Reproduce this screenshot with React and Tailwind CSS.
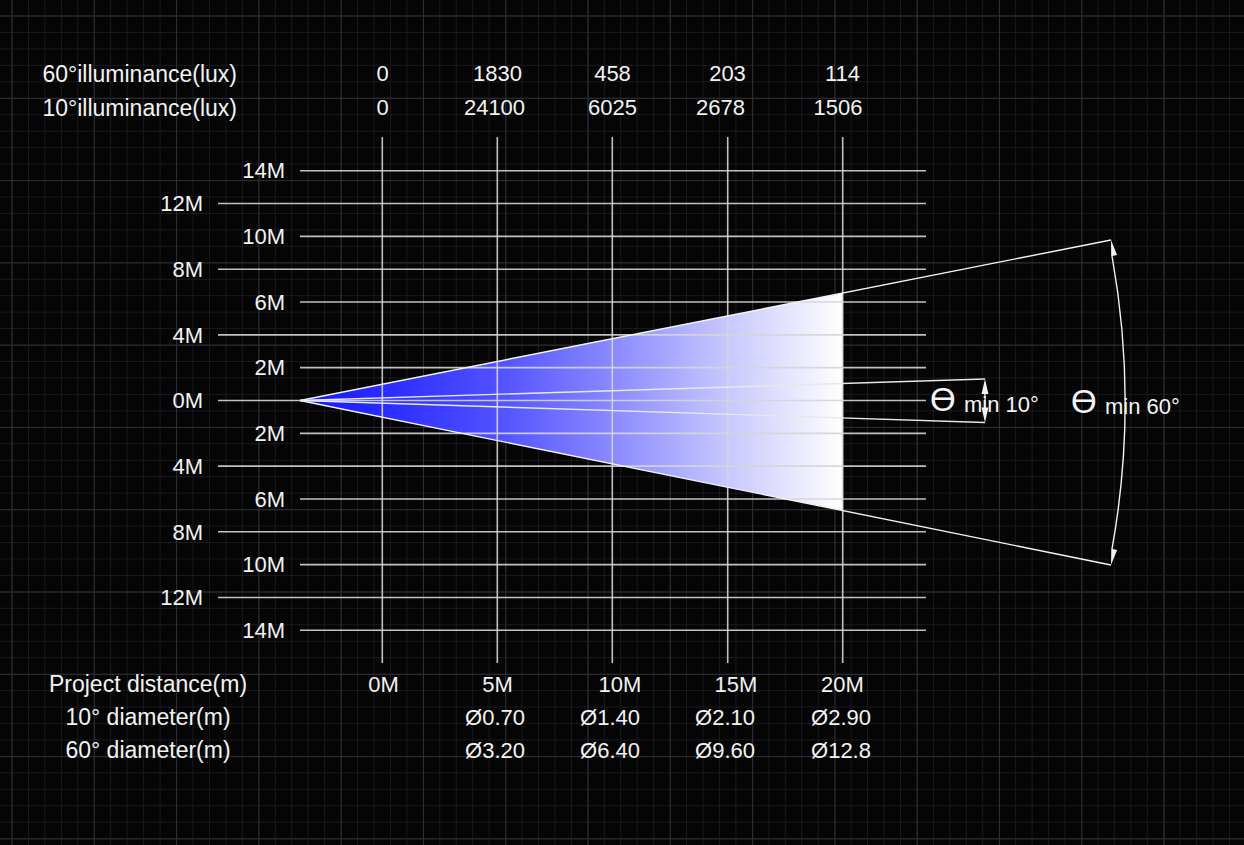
import React from "react";

const cols = [382.3, 497.3, 612.3, 727.7, 842.7];
const mid = 400.5;
const step = 32.83;
const marks = [14, 12, 10, 8, 6, 4, 2, 0, 2, 4, 6, 8, 10, 12, 14];

const topRows = [
  { label: "60°illuminance(lux)", vals: ["0", "1830", "458", "203", "114"], nudge: ["", "", "", "", ""] },
  { label: "10°illuminance(lux)", vals: ["0", "24100", "6025", "2678", "1506"], nudge: ["", "pr-[6px]", "", "pr-[14px]", "pr-[9px]"] },
];

const bottomRows = [
  { label: "Project distance(m)", vals: ["0M", "5M", "10M", "15M", "20M"], nudge: ["pl-[2px]", "", "pl-[15px]", "pl-[17px]", ""] },
  { label: "10° diameter(m)", vals: ["", "Ø0.70", "Ø1.40", "Ø2.10", "Ø2.90"], nudge: ["", "pr-[5px]", "pr-[5px]", "pr-[5px]", "pr-[3px]"] },
  { label: "60° diameter(m)", vals: ["", "Ø3.20", "Ø6.40", "Ø9.60", "Ø12.8"], nudge: ["", "pr-[5px]", "pr-[5px]", "pr-[5px]", "pr-[3px]"] },
];

function Chart() {
  const line = "#d6d6d6";
  return (
    <svg width="1244" height="543" viewBox="0 125 1244 543" className="block">
      <defs>
        <linearGradient id="beam" gradientUnits="userSpaceOnUse" x1="300" y1="0" x2="843" y2="0">
          <stop offset="0" stopColor="#1515ff" />
          <stop offset="0.15" stopColor="#2a2aff" />
          <stop offset="0.36" stopColor="#5050ff" />
          <stop offset="0.577" stopColor="#8a8aff" />
          <stop offset="0.79" stopColor="#c8c8ff" />
          <stop offset="1" stopColor="#ffffff" />
        </linearGradient>
      </defs>

      {/* light cone */}
      <polygon points={`300,${mid} 843,293 843,510.5`} fill="url(#beam)" />

      {/* horizontal scale */}
      {marks.map((m, i) => {
        const y = mid + (i - 7) * step;
        const even = i % 2 === 0;
        return (
          <g key={i}>
            <line x1={even ? 300 : 218} y1={y} x2="926" y2={y} stroke={line} strokeWidth="1.6" opacity="0.9" />
            <text x={even ? 285 : 203} y={y + 7.8} textAnchor="end" fontSize="22" fill="#f2f2f2">
              {m}M
            </text>
          </g>
        );
      })}

      {/* distance columns */}
      {cols.map((x) => (
        <line key={x} x1={x} y1="137" x2={x} y2="663" stroke={line} strokeWidth="1.6" opacity="0.9" />
      ))}

      {/* 60° edges + arc */}
      <line x1="300" y1={mid} x2="1111" y2="240" stroke="#f4f4f4" strokeWidth="1.4" />
      <line x1="300" y1={mid} x2="1111" y2="565" stroke="#f4f4f4" strokeWidth="1.4" />
      <path d="M 1112 256 A 827 827 0 0 1 1112 549" fill="none" stroke="#f4f4f4" strokeWidth="1.4" />
      <polygon points="1111,240 1117,255.1 1111.2,256.3" fill="#f4f4f4" />
      <polygon points="1111,565 1117.1,549.9 1111.3,548.7" fill="#f4f4f4" />

      {/* 10° edges + arrow */}
      <line x1="300" y1={mid} x2="985" y2="379" stroke="#e8e8e8" strokeWidth="1.4" />
      <line x1="300" y1={mid} x2="985" y2="422.5" stroke="#e8e8e8" strokeWidth="1.4" />
      <line x1="985" y1="392" x2="985" y2="409" stroke="#f4f4f4" strokeWidth="1.3" />
      <polygon points="985,379 981.6,394 988.4,394" fill="#f4f4f4" />
      <polygon points="985,422.5 981.6,407.5 988.4,407.5" fill="#f4f4f4" />

      <text x="930" y="411" fontSize="33" fill="#f4f4f4">Ɵ</text>
      <text x="964" y="412" fontSize="22" fill="#f4f4f4">min 10°</text>
      <text x="1071" y="413" fontSize="33" fill="#f4f4f4">Ɵ</text>
      <text x="1105" y="414" fontSize="22" fill="#f4f4f4">min 60°</text>
    </svg>
  );
}

function Row({ row, labelClass, gapClass, h }) {
  return (
    <div className={`flex ${h}`}>
      <div className={`${labelClass} shrink-0 text-[23px]`}>{row.label}</div>
      <div className={`${gapClass} flex text-[22px]`}>
        {row.vals.map((v, i) => (
          <div key={i} className={`w-[115px] shrink-0 text-center ${row.nudge[i]}`}>
            {v}
          </div>
        ))}
      </div>
    </div>
  );
}

export default function App() {
  return (
    <div
      className="w-[1244px] h-[845px] overflow-hidden bg-[#050506] text-[#f2f2f2] font-['Liberation_Sans',Arial,sans-serif] bg-[linear-gradient(to_right,#2e2e38_1px,transparent_1px),linear-gradient(to_bottom,#2e2e38_1px,transparent_1px),linear-gradient(to_right,#191920_1px,transparent_1px),linear-gradient(to_bottom,#191920_1px,transparent_1px)] bg-size-[82.3px_82.3px,82.3px_82.3px,16.46px_16.46px,16.46px_16.46px] bg-position-[11.5px_15.5px]"
    >
      <div className="pt-[57px]">
        {topRows.map((r) => (
          <Row key={r.label} row={r} labelClass="w-[237px] text-right" gapClass="ml-[88px]" h="h-[34px] leading-[34px]" />
        ))}
      </div>
      <Chart />
      <div>
        {bottomRows.map((r) => (
          <Row key={r.label} row={r} labelClass="w-[296px] text-center" gapClass="ml-[29px]" h="h-[33px] leading-[33px]" />
        ))}
      </div>
    </div>
  );
}
